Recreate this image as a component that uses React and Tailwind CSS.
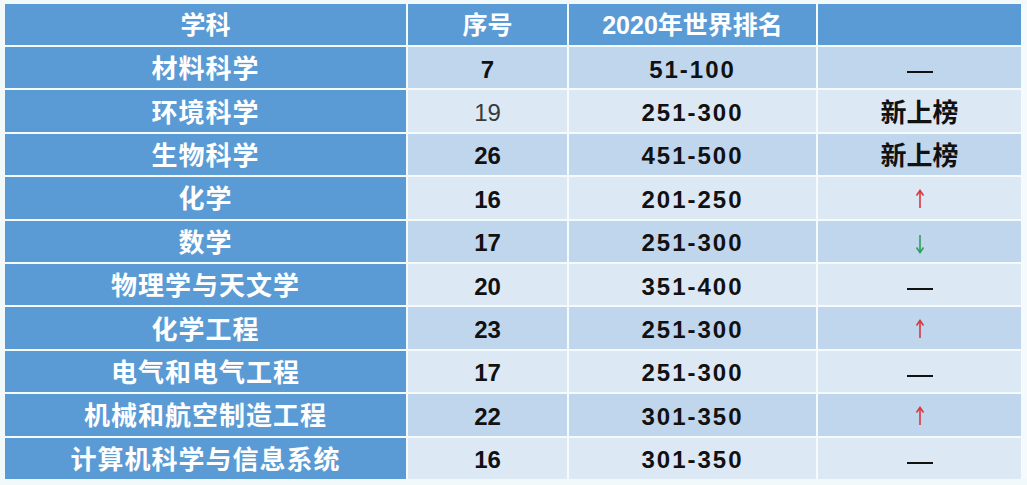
import React from "react";

const rows = [
  { name: "材料科学", no: "7", rank: "51-100", mark: "dash" },
  { name: "环境科学", no: "19", rank: "251-300", mark: "新上榜", thin: true },
  { name: "生物科学", no: "26", rank: "451-500", mark: "新上榜" },
  { name: "化学", no: "16", rank: "201-250", mark: "up" },
  { name: "数学", no: "17", rank: "251-300", mark: "down" },
  { name: "物理学与天文学", no: "20", rank: "351-400", mark: "dash" },
  { name: "化学工程", no: "23", rank: "251-300", mark: "up" },
  { name: "电气和电气工程", no: "17", rank: "251-300", mark: "dash" },
  { name: "机械和航空制造工程", no: "22", rank: "301-350", mark: "up" },
  { name: "计算机科学与信息系统", no: "16", rank: "301-350", mark: "dash" },
];

function Arrow({ down }) {
  const color = down ? "#2e9e5b" : "#d9363e";
  return (
    <svg width="10" height="20" viewBox="0 0 10 20" className={down ? "mt-[2px]" : "-mt-[2px]"}>
      {down ? (
        <>
          <line x1="5" y1="1" x2="5" y2="18" stroke={color} strokeWidth="1.6" />
          <path d="M1.5 13.5 L5 18.5 L8.5 13.5" fill="none" stroke={color} strokeWidth="1.6" />
        </>
      ) : (
        <>
          <line x1="5" y1="2" x2="5" y2="19" stroke={color} strokeWidth="1.6" />
          <path d="M1.5 6.5 L5 1.5 L8.5 6.5" fill="none" stroke={color} strokeWidth="1.6" />
        </>
      )}
    </svg>
  );
}

function Mark({ mark }) {
  if (mark === "dash") return <div className="mt-[5px] h-[2px] w-[26px] bg-[#111]" />;
  if (mark === "up") return <Arrow />;
  if (mark === "down") return <Arrow down />;
  return <span className="text-[26px] font-bold text-[#111]">{mark}</span>;
}

export default function App() {
  const font = { fontFamily: '"Liberation Sans", "Noto Sans CJK SC", sans-serif' };
  return (
    <div className="w-[1027px] h-[485px] bg-[#f2f9fb] pt-[4px] pl-[5px]" style={font}>
      <div className="grid grid-cols-[401px_159px_247px_203px] grid-rows-[41px_repeat(10,41.4px)] gap-[2px] bg-[#f5fbfd]">
        <div className="bg-[#5b9bd5] flex items-center justify-center pt-[3px] text-white font-bold text-[25px]">学科</div>
        <div className="bg-[#5b9bd5] flex items-center justify-center pt-[3px] text-white font-bold text-[25px]">序号</div>
        <div className="bg-[#5b9bd5] flex items-center justify-center pt-[3px] text-white font-bold text-[25px]">2020年世界排名</div>
        <div className="bg-[#5b9bd5]" />
        {rows.map((r, i) => {
          const bg = i % 2 === 0 ? "bg-[#c0d6ed]" : "bg-[#dde8f5]";
          return (
            <React.Fragment key={i}>
              <div className="bg-[#5b9bd5] flex items-center justify-center pt-[4px] text-white font-bold text-[26px] tracking-[1px]">
                {r.name}
              </div>
              <div
                className={`${bg} flex items-center justify-center pt-[4px] text-[24px] ${
                  r.thin ? "font-normal text-[#3a3a3a]" : "font-bold text-[#111]"
                }`}
              >
                {r.no}
              </div>
              <div className={`${bg} flex items-center justify-center pt-[4px] text-[24px] font-bold text-[#111] tracking-[2px]`}>
                {r.rank}
              </div>
              <div className={`${bg} flex items-center justify-center pt-[4px]`}>
                <Mark mark={r.mark} />
              </div>
            </React.Fragment>
          );
        })}
      </div>
    </div>
  );
}
